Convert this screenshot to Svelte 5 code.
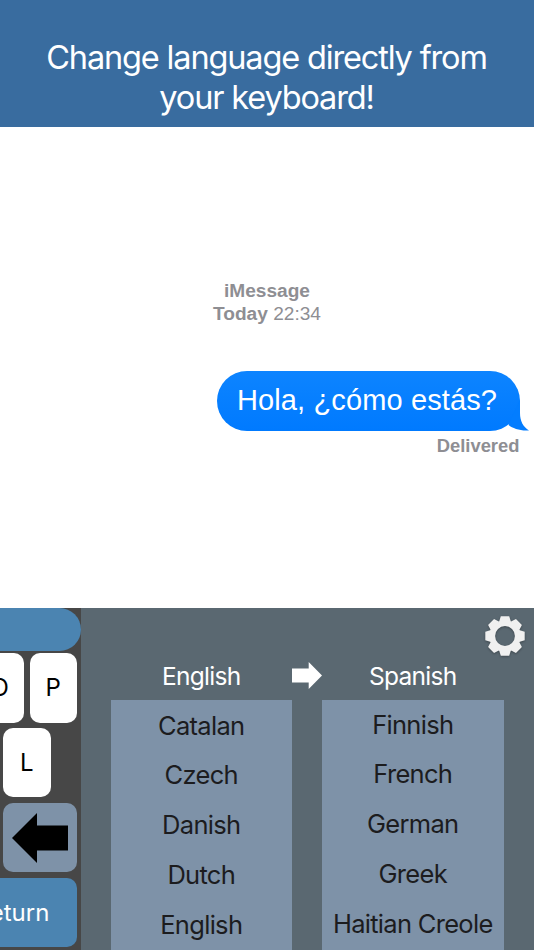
<script>
  let source = 'English';
  let target = 'Spanish';

  const sourceLanguages = ['Catalan', 'Czech', 'Danish', 'Dutch', 'English'];
  const targetLanguages = ['Finnish', 'French', 'German', 'Greek', 'Haitian Creole'];
  const teeth = [0, 45, 90, 135, 180, 225, 270, 315];
</script>

<div class="screen">
  <header>
    <h1>Change language directly from<br />your keyboard!</h1>
  </header>

  <main>
    <div class="stamp">
      <strong class="service">iMessage</strong>
      <div class="time"><strong>Today</strong> 22:34</div>
    </div>
    <div class="bubble">
      <span>Hola, ¿cómo estás?</span>
      <svg class="tail" width="40" height="32" viewBox="0 0 40 32">
        <path d="M31 0V14C31 22 34 28 40 31.4C31 32 24 29.5 19.5 26Z" fill="#037dff" />
      </svg>
    </div>
    <div class="delivered">Delivered</div>
  </main>

  <div class="bottom">
    <div class="keyboard">
      <div class="suggestion"></div>
      <div class="keys top">
        <button class="key">O</button>
        <button class="key">P</button>
      </div>
      <div class="keys">
        <button class="key">L</button>
      </div>
      <div class="keys">
        <button class="key delete" aria-label="Delete">
          <svg width="56" height="50" viewBox="0 0 56 50">
            <path d="M0 25L25 0V12.5H56V37.5H25V50Z" />
          </svg>
        </button>
      </div>
      <div class="keys">
        <button class="key return">return</button>
      </div>
    </div>

    <div class="picker">
      <button class="settings" aria-label="Settings">
        <svg width="42" height="42" viewBox="-21 -21 42 42">
          <g fill="#f0f0f0">
            {#each teeth as angle}
              <path d="M-6 -14L-4.2 -19.7H4.2L6 -14Z" transform="rotate({angle})" />
            {/each}
          </g>
          <circle r="12.7" fill="none" stroke="#f0f0f0" stroke-width="5.6" />
        </svg>
      </button>

      <div class="selected">
        <span class="name">{source}</span>
        <svg width="30" height="27" viewBox="0 0 30 27">
          <path d="M0 6.5H16.7V0L30 13.5L16.7 27V20.5H0Z" fill="#fff" />
        </svg>
        <span class="name">{target}</span>
      </div>

      <div class="lists">
        <ul>
          {#each sourceLanguages as language}
            <li>{language}</li>
          {/each}
        </ul>
        <ul class="target">
          {#each targetLanguages as language}
            <li>{language}</li>
          {/each}
        </ul>
      </div>
    </div>
  </div>
</div>

<style>
  :global(body) {
    margin: 0;
    background: #fff;
  }

  .screen {
    width: 534px;
    height: 950px;
    display: flex;
    flex-direction: column;
    overflow: hidden;
    font-family: Inter, "Liberation Sans", sans-serif;
  }

  header {
    height: 127px;
    box-sizing: border-box;
    padding-top: 38px;
    background: #396c9f;
  }

  h1 {
    margin: 0 1px 0 0;
    color: #fff;
    font-size: 32.5px;
    font-weight: 400;
    line-height: 40px;
    letter-spacing: -1.15px;
    text-align: center;
    white-space: nowrap;
  }

  main {
    flex: 1;
    display: flex;
    flex-direction: column;
    align-items: flex-end;
    font-family: "Liberation Sans", sans-serif;
  }

  .stamp {
    align-self: stretch;
    padding-top: 153px;
    color: #8e8e93;
    font-size: 19.1px;
    line-height: 22.5px;
    text-align: center;
  }

  .bubble {
    position: relative;
    width: 303px;
    height: 59.5px;
    margin: 46px 14px 0 0;
    box-sizing: border-box;
    padding-left: 20px;
    border-radius: 30px;
    background: linear-gradient(#0d84ff, #007aff);
    color: #fff;
    font-size: 29px;
    line-height: 59px;
    letter-spacing: 0.12px;
    white-space: nowrap;
  }

  .tail {
    position: absolute;
    right: -9px;
    bottom: 0;
  }

  .delivered {
    margin: 4.5px 14.5px 0 0;
    color: #8e8e93;
    font-size: 18.4px;
    font-weight: 700;
    line-height: 22px;
  }

  .bottom {
    height: 342px;
    display: flex;
    flex-shrink: 0;
  }

  .keyboard {
    width: 80.5px;
    overflow: hidden;
    background: #474747;
  }

  .suggestion {
    height: 42.5px;
    border-radius: 0 21.5px 21.5px 0;
    background: #4b84b1;
  }

  .keys {
    display: flex;
    gap: 6px;
    margin: 5.5px 0 0 3px;
  }

  .keys.top {
    margin-top: 2.8px;
    margin-left: -24px;
  }

  button {
    border: none;
    padding: 0;
    font-family: inherit;
  }

  .key {
    display: flex;
    align-items: center;
    justify-content: center;
    width: 47.5px;
    height: 69.3px;
    flex-shrink: 0;
    border-radius: 10px;
    background: #fff;
    color: #000;
    font-size: 24px;
  }

  .key.delete {
    width: 74.3px;
    background: #7e92a8;
  }

  .key.return {
    width: 148px;
    margin-left: -73.7px;
    justify-content: flex-end;
    box-sizing: border-box;
    padding-right: 28px;
    background: #4b84b1;
    color: #fff;
  }

  .picker {
    flex: 1;
    display: flex;
    flex-direction: column;
    background: #5a6871;
  }

  .settings {
    align-self: flex-end;
    width: 42px;
    height: 42px;
    margin: 7px 8.5px 0 0;
    background: none;
  }

  .settings svg {
    display: block;
    filter: drop-shadow(0 1px 1px rgba(0, 0, 0, 0.3));
  }

  .selected {
    display: flex;
    align-items: center;
    height: 38px;
    margin-left: 30px;
    color: #fff;
    font-size: 24.5px;
    letter-spacing: -0.7px;
  }

  .name {
    width: 181.5px;
    padding-top: 1px;
    text-align: center;
  }

  .lists {
    display: flex;
    gap: 30px;
    flex: 1;
    margin: 5px 0 0 30px;
    padding-top: 0.4px;
  }

  ul {
    width: 181.5px;
    box-sizing: border-box;
    margin: 0;
    padding: 1px 0 0;
    overflow: hidden;
    list-style: none;
    background: #7e92a8;
    color: #1c1c1e;
    font-size: 25.5px;
    letter-spacing: -0.7px;
    text-align: center;
  }

  ul.target {
    padding: 0;
  }

  li {
    height: 49.9px;
    line-height: 49.9px;
    white-space: nowrap;
  }
</style>
